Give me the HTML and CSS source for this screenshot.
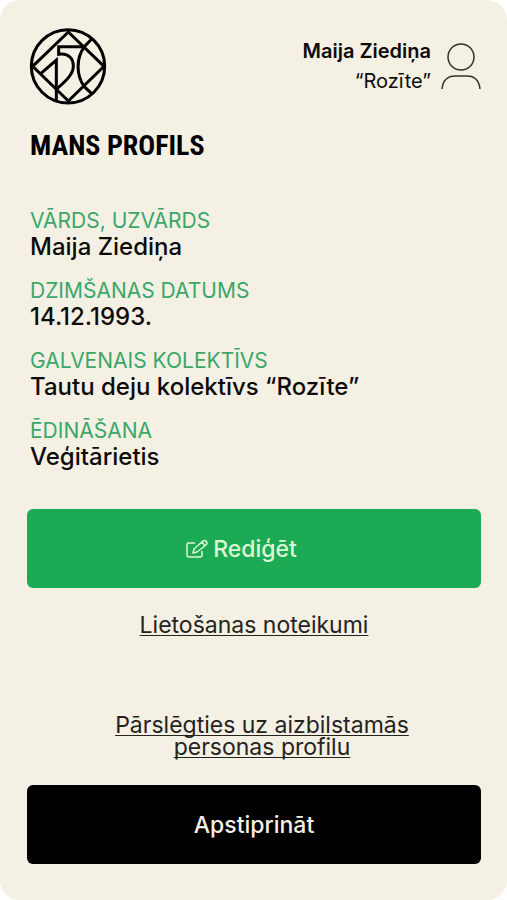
FILE: index.html
```
<!DOCTYPE html>
<html lang="lv">
	<head>
		<meta charset="UTF-8">
		<title>Mans profils</title>
		<meta name="viewport" content="width=device-width, initial-scale=1">
		<link rel="stylesheet" href="styles.css">
	</head>
	<body>
		<main class="card">
			<header class="header">
				<svg class="logo" viewBox="27 24 234 231" role="img" aria-label="150">
					<circle cx="144" cy="139" r="110"/>
					<path d="M145 36L252 139L145 243L38 139Z"/>
					<path d="M62 161L109 120V242"/>
					<path d="M186 80H116V103C144 99 160 114 160 138C160 164 136 184 109 208"/>
					<path d="M215 57L193 80C168 115 168 165 193 200L215 221"/>
				</svg>
				<div class="user">
					<div class="user-text">
						<div class="user-name">Maija Ziediņa</div>
						<div>“Rozīte”</div>
					</div>
					<svg class="user-icon" viewBox="0 0 40 48" aria-hidden="true">
						<circle cx="20" cy="14" r="13"/>
						<path d="M1 46C2 37 6 33 14 33H26C34 33 38 37 39 46"/>
					</svg>
				</div>
			</header>
			<h1 class="title">MANS PROFILS</h1>
			<dl class="details">
				<div>
					<dt>VĀRDS, UZVĀRDS</dt>
					<dd>Maija Ziediņa</dd>
				</div>
				<div>
					<dt>DZIMŠANAS DATUMS</dt>
					<dd>14.12.1993.</dd>
				</div>
				<div>
					<dt>GALVENAIS KOLEKTĪVS</dt>
					<dd>Tautu deju kolektīvs “Rozīte”</dd>
				</div>
				<div>
					<dt>ĒDINĀŠANA</dt>
					<dd>Veģitārietis</dd>
				</div>
			</dl>
			<button class="button button-edit" type="button">
				<svg class="edit-icon" viewBox="0 0 24 20" aria-hidden="true">
					<path d="M10 4H4Q2 4 2 6V16Q2 18 4 18H15Q17 18 17 16V12"/>
					<path d="M8 14L9 10L18 2Q20 1 21 2Q23 4 21 6L12 13ZM17 3L20 7"/>
				</svg>
				Rediģēt
			</button>
			<a class="link" href="#noteikumi">Lietošanas noteikumi</a>
			<a class="link link-switch" href="#profils">Pārslēgties uz aizbilstamās personas profilu</a>
			<button class="button button-confirm" type="button">Apstiprināt</button>
		</main>
	</body>
</html>
```

FILE: styles.css
```
body {
	margin: 0;
	background: #fff;
	color: #0d0c0a;
	font-family: Inter, 'Liberation Sans', sans-serif;
	font-size: 20px;
	line-height: 30px;
}
.card {
	display: flex;
	flex-direction: column;
	box-sizing: border-box;
	min-height: 100vh;
	padding: 28px 26px 36px 27px;
	border-radius: 20px;
	background: #f5f0e4;
}
.header {
	display: flex;
	justify-content: space-between;
	align-items: flex-start;
	padding-left: 2px;
}
.logo {
	width: 78px;
	height: 77px;
	fill: none;
	stroke: #000;
	stroke-width: 9;
}
.user {
	display: flex;
	gap: 10px;
	padding-top: 8px;
	text-align: right;
}
.user-name {
	font-weight: 600;
}
.user-icon {
	width: 40px;
	height: 48px;
	padding-top: 7px;
	fill: none;
	stroke: #35322c;
	stroke-width: 1.5;
}
.title {
	margin: 21px 3px 0;
	color: #000;
	font-family: 'Roboto Condensed', 'Liberation Sans Narrow', 'Liberation Sans', sans-serif;
	font-size: 28px;
	font-weight: 700;
	line-height: 40px;
}
.details {
	display: grid;
	gap: 18px;
	margin: 42px 3px 39px;
	font-size: 24px;
	line-height: 26px;
}
.details dt {
	color: #3aa769;
	font-size: 21px;
}
.details dd {
	margin: 0;
	font-weight: 500;
}
.button {
	display: flex;
	justify-content: center;
	align-items: center;
	gap: 4px;
	height: 79px;
	padding: 0;
	border: 0;
	border-radius: 6px;
	font: inherit;
	font-size: 23px;
	font-weight: 500;
	cursor: pointer;
}
.button-edit {
	padding-right: 26px;
	background: #1daa55;
	color: #dcf8d2;
}
.button-confirm {
	background: #000;
	color: #f5f0e4;
}
.edit-icon {
	width: 24px;
	height: 20px;
	fill: none;
	stroke: currentColor;
	stroke-width: 1.5;
	stroke-linejoin: round;
}
.link {
	align-self: center;
	margin-top: 26px;
	color: #25231e;
	font-size: 23px;
	line-height: 22px;
	text-align: center;
	text-decoration-thickness: 1px;
	text-underline-offset: 2px;
	text-decoration-skip-ink: none;
}
.link-switch {
	max-width: 320px;
	margin: 78px 0 27px 16px;
}
```
